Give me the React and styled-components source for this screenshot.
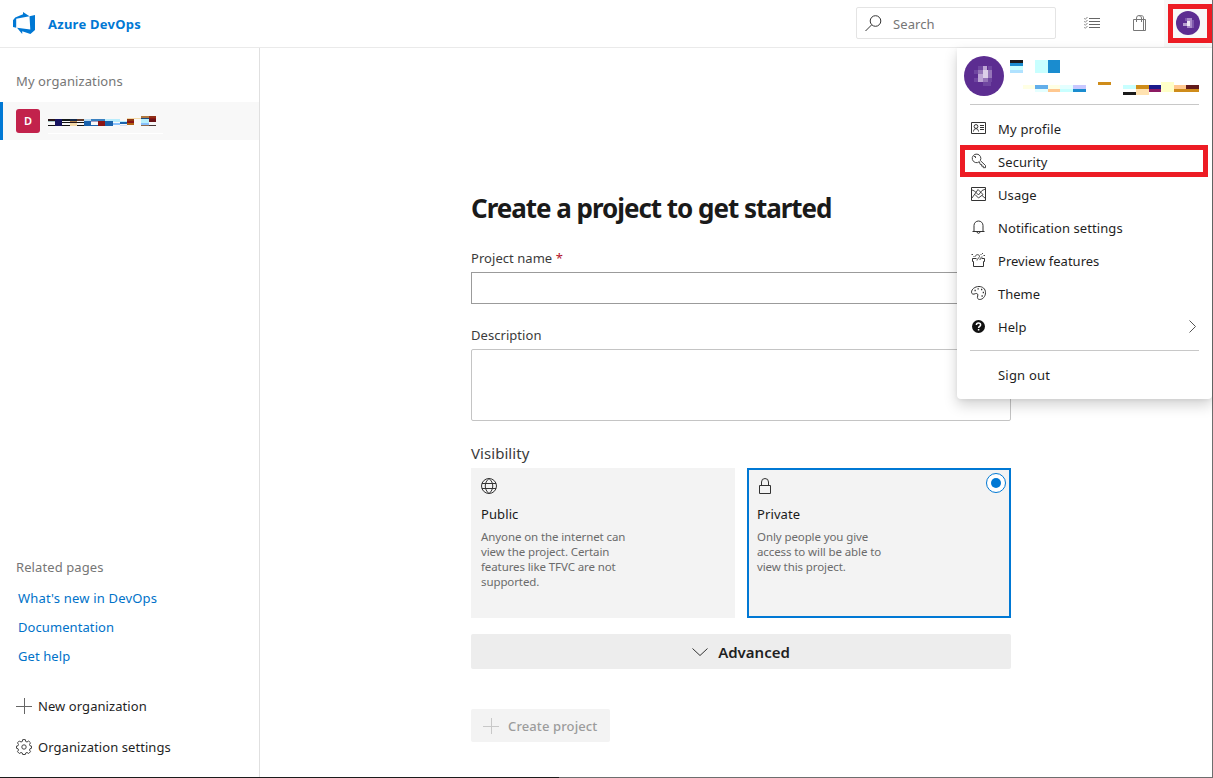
import React from "react";
import styled, { createGlobalStyle } from "styled-components";

const GlobalStyle = createGlobalStyle`
  * {
    box-sizing: border-box;
  }
  body {
    margin: 0;
    overflow: hidden;
    background: #fff;
    color: #1f1f1f;
    font-family: "Noto Sans", "Open Sans", sans-serif;
    font-size: 13px;
  }
`;

const Page = styled.div`
  position: relative;
  display: flex;
  flex-direction: column;
  width: 1213px;
  height: 778px;
  border-right: 1px solid #6e6e6e;
  border-bottom: 1px solid #6e6e6e;
`;

const BottomEdge = styled.div`
  position: absolute;
  left: 0;
  bottom: -1px;
  width: 559px;
  height: 1px;
  background: #1c1c1c;
`;

const Header = styled.header`
  display: flex;
  align-items: center;
  flex: none;
  height: 48px;
  padding-left: 12px;
  border-bottom: 1px solid #eaeaea;
`;

const Brand = styled.div`
  flex: 1;
  display: flex;
  align-items: center;
  gap: 12px;
  color: #0078d4;
  font-weight: 700;
  letter-spacing: 0.25px;
`;

const SearchBox = styled.div`
  display: flex;
  align-items: center;
  gap: 11px;
  width: 200px;
  height: 32px;
  margin-top: -1px;
  padding-left: 8px;
  border: 1px solid #e4e4e4;
  border-radius: 2px;
  color: #767676;
  letter-spacing: 0.1px;

  span {
    padding-top: 2px;
  }
`;

const HeaderIcon = styled.div`
  display: flex;
  align-items: center;
  justify-content: center;
  width: 48px;
  height: 46px;
`;

const HeaderIcons = styled.div`
  display: flex;
  padding-left: 12px;
`;

const AccountButton = styled.div`
  display: flex;
  align-items: center;
  width: 48px;
  height: 47px;
  padding-left: 4px;
  background: #f8f8f8;
`;

const AccountHighlight = styled.div`
  display: flex;
  width: 44px;
  height: 39px;
  padding: 2px 0 0 3px;
  border: 5px solid #ed1c24;
`;

const Body = styled.div`
  flex: 1;
  display: flex;
  min-height: 0;
`;

const Sidebar = styled.nav`
  display: flex;
  flex-direction: column;
  width: 260px;
  border-right: 1px solid #e0e0e0;
`;

const SideHeading = styled.div`
  padding-left: 16px;
  height: 20px;
  line-height: 20px;
  color: #767676;
  margin-top: ${(p) => p.$top};
  letter-spacing: 0.1px;
`;

const OrgRow = styled.div`
  display: flex;
  align-items: center;
  gap: 8px;
  height: 38px;
  margin-top: 11px;
  padding-left: 13px;
  border-left: 3px solid #0078d4;
  background: #f8f8f8;

  svg {
    margin-top: 8px;
  }
`;

const OrgBadge = styled.div`
  width: 24px;
  height: 24px;
  border-radius: 3px;
  background: #c2224c;
  color: #fff;
  font-size: 11px;
  font-weight: 600;
  line-height: 24px;
  text-align: center;
`;

const SideFooter = styled.div`
  margin-top: auto;
  padding-bottom: 10px;
`;

const SideLink = styled.a`
  display: block;
  height: 29px;
  padding-left: 18px;
  line-height: 29px;
  color: #0072c9;
  letter-spacing: ${(p) => p.$track || "0.08px"};
`;

const LinkList = styled.div`
  padding: 7px 0 14px;
`;

const SideAction = styled.div`
  display: flex;
  align-items: center;
  gap: 6px;
  height: 41px;
  padding-left: 16px;
  letter-spacing: 0.07px;
`;

const Main = styled.main`
  width: 540px;
  margin-left: 211px;
  padding-top: 140px;
`;

const Title = styled.h1`
  margin: 0;
  height: 40px;
  line-height: 40px;
  font-size: 26px;
  font-weight: 700;
  letter-spacing: -1.03px;
  white-space: nowrap;
  color: #1a1a1a;
`;

const Label = styled.label`
  display: block;
  height: 20px;
  margin-top: ${(p) => p.$top};
  line-height: 20px;
  font-size: ${(p) => p.$size || "13px"};
  letter-spacing: 0.05px;
  color: #3b3b3b;
`;

const Required = styled.span`
  color: #b4122a;
`;

const Input = styled.div`
  height: 32px;
  margin-top: 4px;
  border: 1px solid #9b9b9b;
`;

const TextArea = styled.div`
  height: 72px;
  margin-top: 4px;
  border: 1px solid #c4c4c4;
  border-radius: 2px;
`;

const Cards = styled.div`
  display: flex;
  gap: 12px;
  margin-top: 5px;
`;

const Card = styled.div`
  position: relative;
  flex: 1;
  height: 150px;
  padding: 8px;
  border: 2px solid ${(p) => (p.$selected ? "#0078d4" : "#f3f3f3")};
  background: #f3f3f3;

  svg {
    display: block;
  }
`;

const CardTitle = styled.div`
  height: 20px;
  margin-top: 10px;
  line-height: 20px;
  letter-spacing: 0.1px;
  color: #1a1a1a;
`;

const CardText = styled.p`
  margin: 5px 0 0;
  font-size: 11.5px;
  line-height: 15px;
  color: #6b6b6b;
  white-space: pre-line;
  letter-spacing: -0.1px;
`;

const Radio = styled.div`
  position: absolute;
  top: 3px;
  right: 3px;
  width: 20px;
  height: 20px;
  padding: 4px;
  border: 1px solid #0078d4;
  border-radius: 50%;
  background: #fff;

  &::after {
    content: "";
    display: block;
    width: 10px;
    height: 10px;
    border-radius: 50%;
    background: #0078d4;
  }
`;

const Advanced = styled.div`
  display: flex;
  align-items: center;
  justify-content: center;
  gap: 10px;
  height: 35px;
  margin-top: 16px;
  border-radius: 2px;
  background: #ededed;
  font-size: 15px;
  font-weight: 600;
`;

const CreateButton = styled.div`
  display: flex;
  align-items: center;
  gap: 9px;
  width: 139px;
  height: 33px;
  margin-top: 40px;
  padding-left: 12px;
  border-radius: 2px;
  background: #f3f3f3;
  color: #9c9c9c;
  font-weight: 500;
  letter-spacing: 0.12px;
  white-space: nowrap;
`;

const Flyout = styled.div`
  position: absolute;
  top: 48px;
  left: 957px;
  width: 255px;
  height: 351px;
  border-radius: 0 0 4px 4px;
  background: #fff;
  box-shadow: 0 6px 14px rgba(0, 0, 0, 0.18), 0 1px 4px rgba(0, 0, 0, 0.06);
`;

const Profile = styled.div`
  display: flex;
  gap: 6px;
  height: 56px;
  padding: 8px 0 0 7px;
`;

const Divider = styled.div`
  height: 1px;
  margin: ${(p) => p.$margin};
  background: #c8c8c8;
`;

const MenuItem = styled.div`
  display: flex;
  align-items: center;
  height: 33px;
  padding: 0 15px 0 14px;
  letter-spacing: ${(p) => p.$track || "0.08px"};

  ${(p) =>
    p.$highlight &&
    `
    margin: 0 4px 1px 3px;
    height: 32px;
    padding: 2px 0 0 6px;
    border: 5px solid #ed1c24;
  `}
`;

const MenuIcon = styled.span`
  display: flex;
  width: 27px;
  padding-bottom: 2px;
`;

const MenuText = styled.span`
  flex: 1;
`;

/* obscured names: [x, y, width, height, colour] */
const orgBlocks = [
  [0, 3, 7, 2, "#2a1418"], [0, 5, 7, 1, "#a8c8c8"], [0, 9, 7, 1, "#111"],
  [7, 3, 7, 7, "#17145f"],
  [14, 3, 8, 2, "#141a1a"], [14, 6, 8, 1, "#111"], [14, 9, 8, 1, "#111"],
  [22, 3, 7, 2, "#13294b"], [22, 5, 7, 1, "#b0804a"], [22, 6, 7, 1, "#2a1418"], [22, 7, 7, 3, "#f3d9a8"],
  [29, 3, 7, 2, "#5f3828"], [29, 6, 7, 1, "#111"], [29, 9, 7, 1, "#111"],
  [36, 3, 7, 2, "#b8dcf4"], [36, 5, 7, 5, "#1a63ad"],
  [43, 3, 14, 2, "#3a80c0"], [43, 5, 7, 1, "#a8a0c0"], [43, 9, 7, 1, "#1a63ad"],
  [50, 5, 7, 5, "#8b1414"],
  [57, 3, 8, 2, "#b8ecfc"], [57, 5, 8, 5, "#1a63ad"],
  [65, 3, 7, 3, "#b8ecfc"], [65, 7, 7, 2, "#88c0fc"],
  [72, 5, 7, 1, "#b8ecfc"], [72, 6, 7, 2, "#1a63ad"], [72, 9, 7, 1, "#cfe0f8"],
  [79, 2, 14, 1, "#f3d9a8"], [79, 3, 7, 2, "#903810"], [79, 5, 7, 2, "#8b1414"], [79, 7, 7, 2, "#b06010"],
  [93, 0, 8, 2, "#b07840"], [93, 2, 8, 1, "#1a4a80"], [93, 3, 8, 4, "#b8f0fc"], [93, 7, 8, 2, "#88c0fc"], [93, 9, 8, 1, "#8c6a50"],
  [101, 0, 7, 2, "#903018"], [101, 2, 7, 1, "#8b1414"], [101, 3, 7, 3, "#6b1418"], [101, 9, 7, 1, "#443434"],
  [0, 17, 115, 1, "#fff"],
];

const userBlocks = [
  [0, 0, 13, 3, "#1a1a1a"], [0, 3, 13, 3, "#1a8ccf"], [0, 6, 13, 4, "#c8ffff"], [0, 10, 13, 3, "#b0e2ff"],
  [25, 0, 13, 13, "#c8ffff"], [38, 0, 12, 13, "#1a8ccf"],
  [13, 25, 12, 4, "#ffffe4"],
  [25, 25, 13, 4, "#62aeea"], [25, 29, 13, 3, "#e4ffff"],
  [38, 25, 12, 4, "#ffffe4"], [38, 29, 12, 3, "#ffc890"],
  [50, 25, 13, 4, "#e4ffff"], [50, 29, 13, 3, "#c8ffff"],
  [63, 25, 13, 4, "#c8c8ff"], [63, 29, 13, 3, "#1a8ccf"],
  [88, 22, 13, 3, "#cf8c1a"],
  [113, 25, 13, 4, "#c8ffff"], [113, 32, 13, 3, "#1a1a1a"],
  [126, 25, 13, 4, "#cf8c1a"], [126, 29, 13, 6, "#ffe2b0"],
  [139, 25, 12, 4, "#1a1a8c"], [139, 29, 12, 3, "#8c1a62"],
  [151, 22, 13, 10, "#ffffc8"],
  [164, 25, 12, 4, "#ffc890"], [164, 29, 25, 3, "#cf8c1a"],
  [176, 25, 13, 4, "#621a1a"],
];

const Blocks = ({ data, width, height, top = 0 }) => (
  <svg width={width} height={height} shapeRendering="crispEdges">
    {data.map(([x, y, w, h, fill], i) => (
      <rect key={i} x={x} y={y + top} width={w} height={h} fill={fill} />
    ))}
  </svg>
);

const Avatar = () => (
  <svg width="40" height="40">
    <circle cx="20" cy="20" r="20" fill="#5c2d91" />
    <g shapeRendering="crispEdges">
      <path d="M10 14h4v4h-4zM10 22h4v4h-4zM14 10h5v4h-5zM24 10h4v4h-4zM24 22h4v4h-4zM19 26h8v4h-8z" fill="#6f46a0" />
      <path d="M14 14h5v4h-5zM24 14h4v8h-4zM19 22h5v4h-5z" fill="#9676b9" />
      <path d="M14 18h5v8h-5zM19 10h4v4h-4z" fill="#bda5d5" />
      <path d="M19 14h5v8h-5z" fill="#dccfe8" />
    </g>
  </svg>
);

const SmallAvatar = () => (
  <svg width="24" height="24">
    <circle cx="12" cy="12" r="12" fill="#5c2d91" />
    <g shapeRendering="crispEdges">
      <path d="M7 12h4v3H7zM14 14h3v3h-3z" fill="#b79fd0" />
      <path d="M11 7h5v10h-5z" fill="#a98bc8" />
      <path d="M11 10h3v5h-3z" fill="#eee6f4" />
      <path d="M9 7h2v3H9zM16 9h2v8h-2z" fill="#7d57ab" />
    </g>
  </svg>
);

const Icon = ({ size = 16, box = 16, color = "#333", sw = 1, children }) => (
  <svg
    width={size}
    height={size}
    viewBox={`0 0 ${box} ${box}`}
    fill="none"
    stroke={color}
    strokeWidth={sw}
  >
    {children}
  </svg>
);

const Logo = () => (
  <svg width="24" height="24" viewBox="0 0 24 24" fill="#0078d4">
    <path d="M1 8.2 3.2 5.5 11 2.3V0l6.5 4.2L4.2 6.8v9L1 15z" />
    <path d="M17.5 4.2 23 3v15l-4.6 4-8.2-2.8v2.9L5 15.8l13.3 1.7z" />
  </svg>
);

const Plus = ({ color }) => (
  <Icon color={color}>
    <path d="M8.5 0v16M0 8.5h16" />
  </Icon>
);

const icons = {
  profile: (
    <Icon>
      <path d="M.5 2.5h14v11H.5zM9 5.5h4M9 7.5h4M9 9.5h4M2.5 11.5c.2-1.8 1-2.8 2.5-2.8s2.3 1 2.5 2.8" />
      <circle cx="5" cy="6.5" r="1.9" />
    </Icon>
  ),
  security: (
    <Icon color="#444">
      <path d="M8.300 8.700a4.300 4.300 0 1 1 1-1.200l5.200 5v2.200h-2.200v-1.500h-1.600v-1.700H9.300z" />
      <path d="M3 3.500h1.500V5" />
    </Icon>
  ),
  usage: (
    <Icon>
      <path d="M.5 1.500h14v13H.5z" />
      <path d="M1 4l2.500 1L7.500 9 11 4.500l3.500-1.500M1 12l6-8.500 5 5L7.500 12 4 8.500M11 9.500l3.500 3" strokeWidth=".9" />
    </Icon>
  ),
  bell: (
    <Icon>
      <path d="M1.500 12.500h12M3 12.500v-6a4.500 4.500 0 0 1 9 0v6M6 13c.2 1.800 2.800 1.800 3 0" />
    </Icon>
  ),
  preview: (
    <Icon>
      <path d="M5.500 6.500h-4v3h1v5h10v-5h1v-3h-3" />
      <path d="M4.500 4.500c0-2.500 4-2.500 4 0 0 1.500-2.500 1.800-2.500 4M9 8c0-2 1-3 2.500-3M9.500 2.500h1M11.500 1v1M12.500 3.500h1.500M.5 2.500h1.500M2.500 4.500h1" strokeWidth=".9" />
    </Icon>
  ),
  theme: (
    <Icon>
      <path d="M4.500 8.600c1.900-.6 2.800.8 2.200 2.400-.8 2.200.3 3.500 2 3.500 3 0 5.800-3 5.800-6.800C14.500 3.700 11.500 1.500 8 1.500 3.800 1.500.5 4.300.5 7.200c0 2 2 2.500 4 1.400z" />
      <path d="M3.500 5.500h1.300M6.500 3.800h1.300M10 4.500h1.300M11.700 7.500H13M10.500 11h1.300" strokeWidth="1.3" />
    </Icon>
  ),
  help: (
    <Icon>
      <circle cx="7.500" cy="8.500" r="6.500" fill="#111" stroke="none" />
      <path d="M5.400 7c.1-2.700 4.200-2.400 4.200 0 0 1.400-2 1.500-2 3M7.600 11v1.500" stroke="#fff" strokeWidth="1.500" />
    </Icon>
  ),
};

const menu = [
  { icon: "profile", text: "My profile", track: "0.2px" },
  { icon: "security", text: "Security", highlight: true },
  { icon: "usage", text: "Usage" },
  { icon: "bell", text: "Notification settings" },
  { icon: "preview", text: "Preview features", track: "0.01px" },
  { icon: "theme", text: "Theme", track: "0.01px" },
  { icon: "help", text: "Help", more: true },
];

const AccountMenu = () => (
  <Flyout>
    <Profile>
      <Avatar />
      <Blocks data={userBlocks} width={189} height={40} top={4} />
    </Profile>
    <Divider $margin="0 13px 7px" />
    {menu.map((item) => (
      <MenuItem
        key={item.text}
        $highlight={item.highlight}
        $track={item.track}
      >
        <MenuIcon>{icons[item.icon]}</MenuIcon>
        <MenuText>{item.text}</MenuText>
        {item.more && (
          <Icon box={16} color="#555">
            <path d="M8.500 1.500l6 6-6 6" />
          </Icon>
        )}
      </MenuItem>
    ))}
    <Divider $margin="7px 13px" />
    <MenuItem $track="0.2px">
      <MenuIcon />
      <MenuText>Sign out</MenuText>
    </MenuItem>
  </Flyout>
);

const App = () => {
  return (
    <Page>
      <GlobalStyle />
      <Header>
        <Brand>
          <Logo />
          Azure DevOps
        </Brand>
        <SearchBox>
          <Icon size={17} box={17}>
            <circle cx="10.500" cy="6" r="5.300" />
            <path d="M6.500 10 .5 16" />
          </Icon>
          <span>Search</span>
        </SearchBox>
        <HeaderIcons>
          <HeaderIcon>
            <Icon color="#666">
              <path d="M5 3.500h11M5 6.500h11M5 9.500h11M5 12.500h11" />
              <path
                d="M.3 3.300l1 1L3.500 2M.3 6.300l1 1L3.500 5M.3 9.300l1 1L3.500 8M.3 12.300l1 1L3.500 11"
                strokeWidth=".8"
              />
            </Icon>
          </HeaderIcon>
          <HeaderIcon>
            <Icon color="#777">
              <path d="M1.500 4.500h12v11h-12zM4.500 7V3a2.500 2.500 0 0 1 5 0v4M7 1c2-1.500 4.500-.5 4.500 2v12.500" />
            </Icon>
          </HeaderIcon>
          <AccountButton>
            <AccountHighlight>
              <SmallAvatar />
            </AccountHighlight>
          </AccountButton>
        </HeaderIcons>
      </Header>
      <Body>
        <Sidebar>
          <SideHeading $top="23px">My organizations</SideHeading>
          <OrgRow>
            <OrgBadge>D</OrgBadge>
            <Blocks data={orgBlocks} width={115} height={18} />
          </OrgRow>
          <SideFooter>
            <SideHeading>Related pages</SideHeading>
            <LinkList>
              <SideLink $track="0.18px">What's new in DevOps</SideLink>
              <SideLink>Documentation</SideLink>
              <SideLink>Get help</SideLink>
            </LinkList>
            <SideAction>
              <Plus color="#666" />
              New organization
            </SideAction>
            <SideAction>
              <Icon color="#444">
                <circle cx="8" cy="8" r="2.200" />
                <path d="M6.700.6h2.600l.4 1.900 1.300.5 1.700-1 1.800 1.800-1 1.700.5 1.300 1.500.3v2.200l-1.500.4-.5 1.300 1 1.700-1.800 1.800-1.700-1-1.300.5-.4 1.500H6.700l-.4-1.500-1.300-.5-1.700 1-1.800-1.800 1-1.700-.5-1.300-1.500-.4V7.100l1.500-.3.5-1.300-1-1.700 1.800-1.800 1.700 1 1.300-.5z" />
              </Icon>
              Organization settings
            </SideAction>
          </SideFooter>
        </Sidebar>
        <Main>
          <Title>Create a project to get started</Title>
          <Label $top="20px">
            Project name <Required>*</Required>
          </Label>
          <Input />
          <Label $top="21px">Description</Label>
          <TextArea />
          <Label $top="22px" $size="15px">
            Visibility
          </Label>
          <Cards>
            <Card>
              <Icon>
                <circle cx="8" cy="8" r="7.500" />
                <path d="M1 5.500h14M1 10.500h14M8 .5c-5 4-5 11 0 15M8 .5c5 4 5 11 0 15" />
              </Icon>
              <CardTitle>Public</CardTitle>
              <CardText>
                {
                  "Anyone on the internet can\nview the project. Certain\nfeatures like TFVC are not\nsupported."
                }
              </CardText>
            </Card>
            <Card $selected>
              <Icon>
                <path d="M2.500 7.500h11v8h-11zM4.500 7.500V4a3.500 3.500 0 0 1 7 0v3.500" />
              </Icon>
              <CardTitle>Private</CardTitle>
              <CardText>
                {
                  "Only people you give\naccess to will be able to\nview this project."
                }
              </CardText>
              <Radio />
            </Card>
          </Cards>
          <Advanced>
            <Icon>
              <path d="M.5 4.500 8 11.500l7.500-7" />
            </Icon>
            Advanced
          </Advanced>
          <CreateButton>
            <Plus color="#c8c8c8" />
            Create project
          </CreateButton>
        </Main>
      </Body>
      <AccountMenu />
      <BottomEdge />
    </Page>
  );
};

export default App;
